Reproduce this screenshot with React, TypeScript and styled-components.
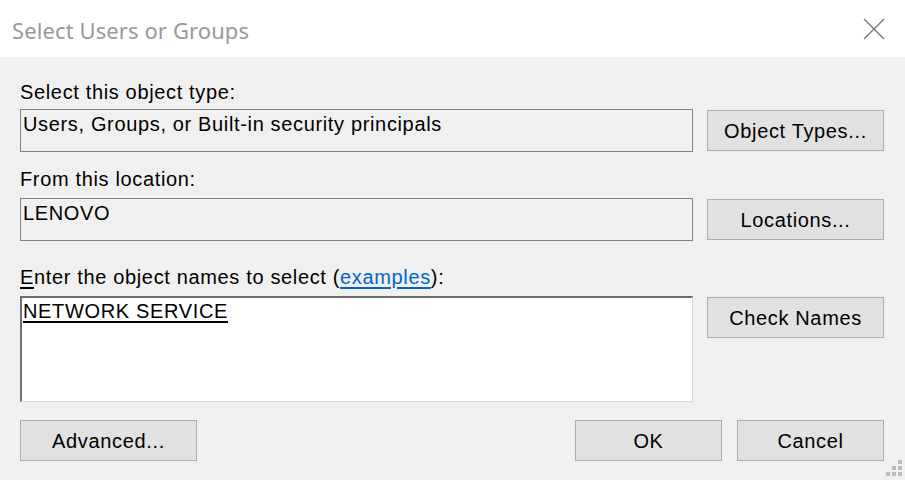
import React from 'react'
import styled, { createGlobalStyle } from 'styled-components'

const GlobalStyle = createGlobalStyle`
  html, body {
    margin: 0;
    padding: 0;
    background: #f0f0f0;
  }
  body {
    font-family: "Liberation Sans", Arial, sans-serif;
    color: #000;
  }
`

const Dialog = styled.div`
  position: relative;
  width: 905px;
  height: 480px;
  background: #f0f0f0;
  overflow: hidden;
  display: flex;
  flex-direction: column;
`

const TitleBar = styled.div`
  height: 57px;
  background: #fff;
  display: flex;
  align-items: center;
  justify-content: space-between;
  padding: 0 20px 0 12px;
  box-sizing: border-box;
`

const Title = styled.div`
  font-family: "Noto Sans", "Open Sans", sans-serif;
  font-size: 22px;
  letter-spacing: 0.1px;
  color: #999;
  margin-top: 2px;
`

const CloseButton = styled.div`
  width: 22px;
  height: 22px;
  display: flex;
  margin-top: 1px;
`

const Body = styled.div`
  flex: 1;
  padding: 24px 21px 0 20px;
  display: flex;
  flex-direction: column;
  font-size: 20px;
  letter-spacing: 0.65px;
`

const Label = styled.div<{ $gap?: number }>`
  line-height: 23px;
  height: 23px;
  margin-top: ${(p) => p.$gap ?? 0}px;
  margin-bottom: ${(p) => (p.$gap ? 7 : 5)}px;
`

const Row = styled.div`
  display: flex;
  align-items: flex-start;
  gap: 14px;
`

const ReadOnlyField = styled.div`
  width: 673px;
  height: 43px;
  box-sizing: border-box;
  border: 1px solid #828282;
  background: #f0f0f0;
  line-height: 23px;
  padding: 3px 2px 0;
`

const NamesBox = styled.div`
  width: 673px;
  height: 106px;
  box-sizing: border-box;
  background: #fff;
  border-top: 2px solid #6e6e6e;
  border-left: 2px solid #6e6e6e;
  border-right: 1px solid #d9d9d9;
  border-bottom: 1px solid #d9d9d9;
  line-height: 23px;
  padding: 2px 1px 0;
`

const Resolved = styled.span`
  text-decoration: underline;
  text-underline-offset: 3px;
`

const Button = styled.div<{ $width?: number; $top?: number }>`
  width: ${(p) => p.$width ?? 177}px;
  height: 41px;
  margin-top: ${(p) => p.$top ?? 1}px;
  box-sizing: border-box;
  background: #e1e1e1;
  border: 1px solid #adadad;
  display: flex;
  align-items: center;
  justify-content: center;
  padding-top: 1px;
`

const Link = styled.span`
  color: #0066cc;
  text-decoration: underline;
  text-underline-offset: 3px;
`

const Mnemonic = styled.span`
  text-decoration: underline;
  text-underline-offset: 3px;
`

const Footer = styled.div`
  display: flex;
  justify-content: space-between;
  margin-top: 18px;
`

const FooterRight = styled.div`
  display: flex;
  gap: 15px;
`

const Grip = styled.div`
  position: absolute;
  right: 3px;
  bottom: 4px;
  width: 16px;
  height: 16px;
`

const CloseIcon = () => (
  <svg width="22" height="22" viewBox="0 0 22 22">
    <path d="M1 1 L21 21 M21 1 L1 21" stroke="#777" strokeWidth="1.4" />
  </svg>
)

const GripIcon = () => (
  <svg width="16" height="16" viewBox="0 0 16 16">
    {[
      [12, 0],
      [6, 6],
      [12, 6],
      [0, 12],
      [6, 12],
      [12, 12],
    ].map(([x, y]) => (
      <rect key={`${x}-${y}`} x={x} y={y} width="4" height="4" fill="#bcbcbc" />
    ))}
  </svg>
)

export default function App() {
  return (
    <>
      <GlobalStyle />
      <Dialog>
        <TitleBar>
          <Title>Select Users or Groups</Title>
          <CloseButton>
            <CloseIcon />
          </CloseButton>
        </TitleBar>
        <Body>
          <Label>Select this object type:</Label>
          <Row>
            <ReadOnlyField>Users, Groups, or Built-in security principals</ReadOnlyField>
            <Button>Object Types...</Button>
          </Row>
          <Label $gap={16}>From this location:</Label>
          <Row>
            <ReadOnlyField>LENOVO</ReadOnlyField>
            <Button>Locations...</Button>
          </Row>
          <Label $gap={25}>
            <Mnemonic>E</Mnemonic>nter the object names to select (<Link>examples</Link>):
          </Label>
          <Row>
            <NamesBox>
              <Resolved>NETWORK SERVICE</Resolved>
            </NamesBox>
            <Button>Check Names</Button>
          </Row>
          <Footer>
            <Button $top={0}>Advanced...</Button>
            <FooterRight>
              <Button $width={147} $top={0}>
                OK
              </Button>
              <Button $width={147} $top={0}>
                Cancel
              </Button>
            </FooterRight>
          </Footer>
        </Body>
        <Grip>
          <GripIcon />
        </Grip>
      </Dialog>
    </>
  )
}
